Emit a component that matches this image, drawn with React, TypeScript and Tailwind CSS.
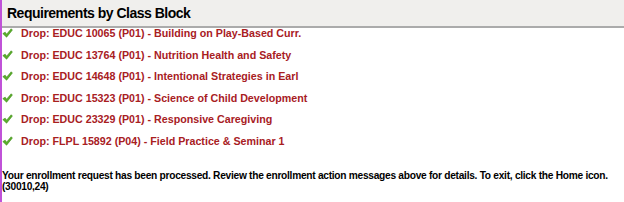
const drops = [
  "Drop: EDUC 10065 (P01) - Building on Play-Based Curr.",
  "Drop: EDUC 13764 (P01) - Nutrition Health and Safety",
  "Drop: EDUC 14648 (P01) - Intentional Strategies in Earl",
  "Drop: EDUC 15323 (P01) - Science of Child Development",
  "Drop: EDUC 23329 (P01) - Responsive Caregiving",
  "Drop: FLPL 15892 (P04) - Field Practice & Seminar 1",
];

function Check() {
  return (
    <svg width="11" height="10" viewBox="0 0 11 10" aria-hidden="true" className="shrink-0">
      <path d="M0.8 5.6 L3.2 4.2 L4.6 6.2 L9.2 0.8 L10.4 2 L4.6 9.2 Z" fill="#5cb02a" stroke="#3c8a1a" strokeWidth="0.6" strokeLinejoin="round" />
    </svg>
  );
}

export default function App() {
  return (
    <div className="w-[624px] h-[202px] bg-white border-l-2 border-[#c052d8] overflow-hidden font-['Liberation_Sans',Arial,sans-serif]">
      <div className="h-[28px] bg-[#f0efed] border-b-2 border-[#ababab] flex items-center pl-[5px]">
        <h2 className="text-[14px] tracking-[-0.5px] font-bold text-black leading-none">Requirements by Class Block</h2>
      </div>

      <ul className="flex flex-col gap-[9.6px] -mt-[1px]">
        {drops.map((d) => (
          <li key={d} className="flex items-center h-[12px] leading-[12px]">
            <Check />
            <span className="ml-[8px] text-[10.7px] tracking-[0px] font-bold text-[#a8201f] whitespace-nowrap">{d}</span>
          </li>
        ))}
      </ul>

      <p className="mt-[23px] text-[10.2px] tracking-[-0.28px] font-bold text-black leading-[11px] whitespace-nowrap">
        Your enrollment request has been processed. Review the enrollment action messages above for details. To exit, click the Home icon.
        <br />
        (30010,24)
      </p>
    </div>
  );
}
